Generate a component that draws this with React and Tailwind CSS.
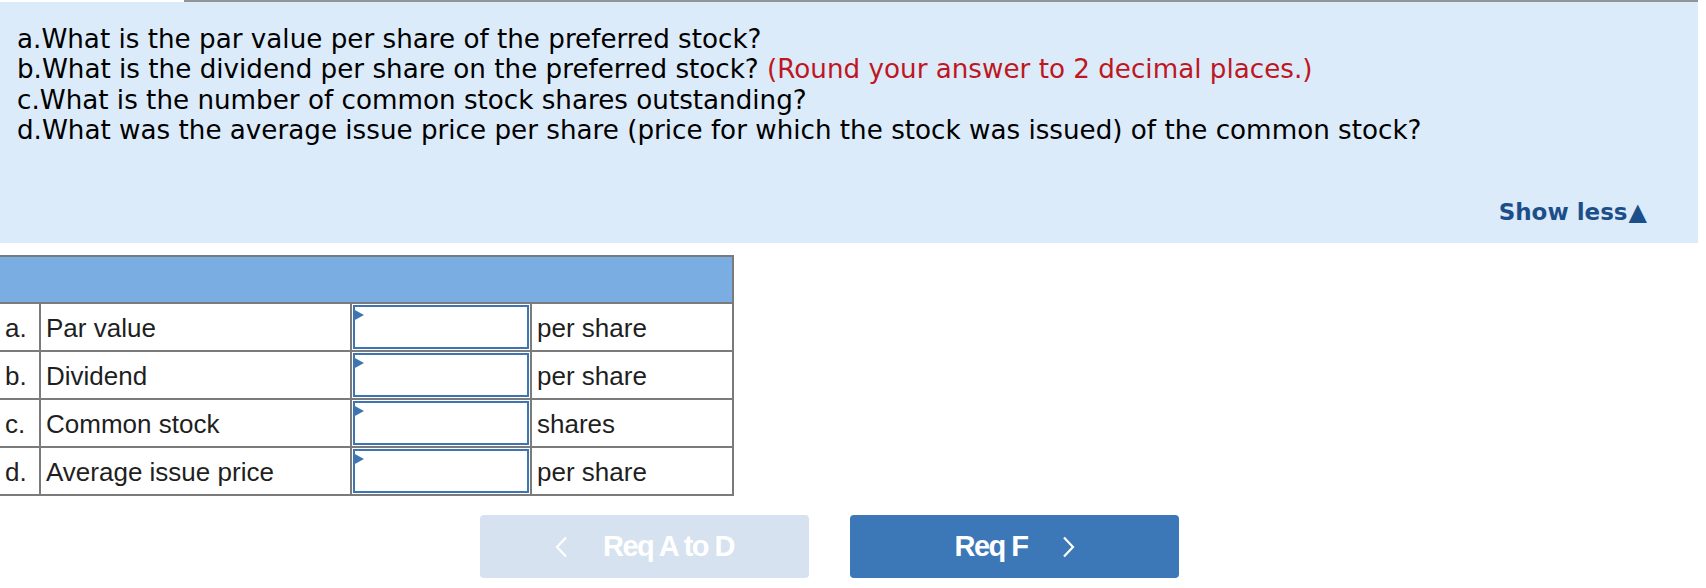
const questions = [
  { label: "a.", text: "What is the par value per share of the preferred stock?" },
  {
    label: "b.",
    text: "What is the dividend per share on the preferred stock?",
    note: "(Round your answer to 2 decimal places.)",
  },
  { label: "c.", text: "What is the number of common stock shares outstanding?" },
  {
    label: "d.",
    text: "What was the average issue price per share (price for which the stock was issued) of the common stock?",
  },
];

const rows = [
  { key: "a.", name: "Par value", unit: "per share" },
  { key: "b.", name: "Dividend", unit: "per share" },
  { key: "c.", name: "Common stock", unit: "shares" },
  { key: "d.", name: "Average issue price", unit: "per share" },
];

const cell = "border-2 border-[#7b7b7b]";

const AnswerInput = () => (
  <div className="relative h-[44px] m-[1px] border-2 border-[#3d74b4] bg-white">
    <span className="absolute left-[-2px] top-[2px] w-0 h-0 border-y-[6px] border-y-transparent border-l-[11px] border-l-[#3d74b4]" />
  </div>
);

const Chevron = ({ dir }) => (
  <svg width="13" height="22" viewBox="0 0 13 22" fill="none" stroke="currentColor" strokeWidth="2.2">
    {dir === "left" ? <polyline points="11,1.5 2,11 11,20.5" /> : <polyline points="2,1.5 11,11 2,20.5" />}
  </svg>
);

const App = () => {
  return (
    <div className="w-[1706px] h-[588px] bg-white overflow-hidden">
      {/* question panel */}
      <div className="flex h-[2px] w-[1698px]">
        <div className="w-[184px] bg-white" />
        <div className="flex-1 bg-[#909398]" />
      </div>
      <div
        className="w-[1698px] h-[241px] bg-[#dcebf9] pl-[17px] pt-[22px] pr-[51px] flex flex-col"
        style={{ fontFamily: "'DejaVu Sans', Verdana, sans-serif" }}
      >
        <div className="text-[26.2px] leading-[30.4px] text-black">
          {questions.map((q) => (
            <div key={q.label}>
              {q.label}
              {q.text}
              {q.note && <span className="text-[#bf1722]"> {q.note}</span>}
            </div>
          ))}
        </div>
        <div className="mt-[51px] flex justify-end">
          <button className="text-[23px] leading-[30px] font-bold text-[#1c4f8a] flex items-center">
            Show less<span className="text-[24px] ml-[1px] leading-[30px]">▲</span>
          </button>
        </div>
      </div>

      {/* answer table */}
      <table
        className="mt-[12px] ml-[-3px] border-collapse table-fixed w-[735px] text-[26px] text-[#1f1f1f]"
        style={{ fontFamily: "'Liberation Sans', Arial, sans-serif" }}
      >
        <colgroup>
          <col className="w-[42px]" />
          <col className="w-[311px]" />
          <col className="w-[180px]" />
          <col className="w-[202px]" />
        </colgroup>
        <thead>
          <tr className="h-[47px] bg-[#7aade2]">
            <th colSpan={4} className={cell} />
          </tr>
        </thead>
        <tbody>
          {rows.map((r) => (
            <tr key={r.key} className="h-[47px]">
              <td className={`${cell} pl-[6px] pt-[2px]`}>{r.key}</td>
              <td className={`${cell} pl-[5px] pt-[2px]`}>{r.name}</td>
              <td className={`${cell} p-0`}>
                <AnswerInput />
              </td>
              <td className={`${cell} pl-[5px] pt-[2px]`}>{r.unit}</td>
            </tr>
          ))}
        </tbody>
      </table>

      {/* navigation buttons */}
      <div
        className="mt-[19px] ml-[480px] flex gap-[41px] text-white font-bold text-[29px] tracking-[-1.5px]"
        style={{ fontFamily: "'Liberation Sans', Arial, sans-serif" }}
      >
        <button className="w-[329px] h-[63px] rounded-[4px] bg-[#d6e2f0] flex items-center justify-center gap-[35px]">
          <Chevron dir="left" />
          <span>Req A to D</span>
        </button>
        <button className="w-[329px] h-[63px] rounded-[4px] bg-[#3c78b8] flex items-center justify-center gap-[34px]">
          <span>Req F</span>
          <Chevron dir="right" />
        </button>
      </div>
    </div>
  );
};

export default App;
